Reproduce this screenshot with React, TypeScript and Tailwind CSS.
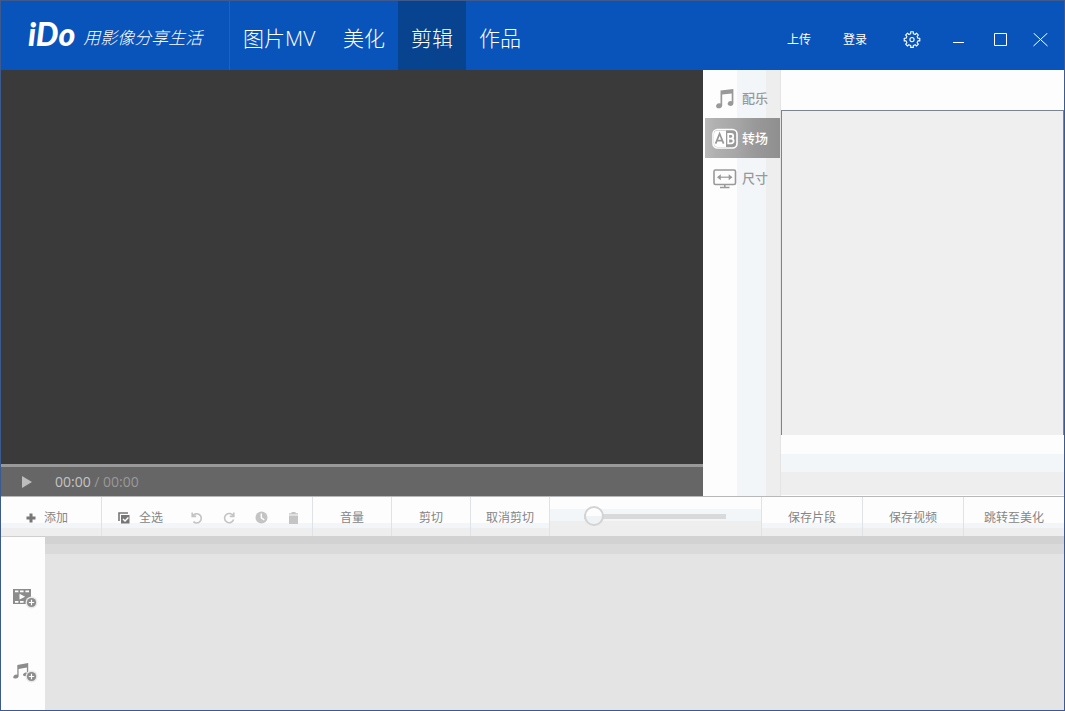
import { useState } from "react";
import type { ReactNode } from "react";

const NAV = ["图片MV", "美化", "剪辑", "作品"];

function MusicIcon() {
  return (
    <svg width="18" height="20" viewBox="0 0 18 20" fill="#999" aria-hidden="true">
      <path d="M4.5 1.6 17.4 0v14.2a2.9 2.3 -15 1 1-1.7-1.9V4.4L6.2 5.6v10.8a3.1 2.5 -15 1 1-1.7-2z" />
    </svg>
  );
}

function TransitionIcon() {
  return (
    <svg width="26" height="22" viewBox="0 0 26 22" fill="none" aria-hidden="true">
      <rect x="1" y="1.5" width="24" height="18.5" rx="4.5" fill="#9a9a9a" stroke="#fff" strokeWidth="1.6" />
      <path d="M5.5 2.5H14v16.5H5.5a3.5 3.5 0 0 1-3.5-3.5V6a3.5 3.5 0 0 1 3.5-3.5z" fill="#fff" />
      <path d="M3.6 15.6 7.6 5.8 11.6 15.6M5 12.6h5.2" stroke="#999" strokeWidth="1.7" />
      <path d="M16.2 6v9.4h3a2.4 2.4 0 0 0 0-4.8h-3 2.7a2.3 2.3 0 0 0 0-4.6z" stroke="#fff" strokeWidth="1.8" />
    </svg>
  );
}

function SizeIcon() {
  return (
    <svg width="24" height="20" viewBox="0 0 24 20" fill="none" stroke="#999" aria-hidden="true">
      <rect x="1" y="1" width="21.5" height="14.5" rx="1.5" strokeWidth="1.6" />
      <path d="M5.5 8.2h12.5" strokeWidth="1.2" />
      <path d="M4 8.2 7.8 5.2v6zM19.5 8.2 15.7 5.2v6z" fill="#999" stroke="none" />
      <path d="M11.8 15.5v2.7M7 18.5h9.5" strokeWidth="1.6" />
    </svg>
  );
}

function GearIcon() {
  return (
    <svg width="18" height="18" viewBox="0 0 18 18" fill="none" stroke="#fff" strokeWidth="1.1" strokeLinejoin="round" aria-hidden="true">
      <path d="M7.7 2.7V.8h2.6v1.9l1.9.8 1.3-1.3 1.9 1.9-1.3 1.3.8 1.9h1.9v2.6h-1.9l-.8 1.9 1.3 1.3-1.9 1.9-1.3-1.3-1.9.8v1.9H7.7v-1.9l-1.9-.8-1.3 1.3-1.9-1.9 1.3-1.3-.8-1.9H1.2V7.3h1.9l.8-1.9-1.3-1.3 1.9-1.9 1.3 1.3z" />
      <circle cx="9" cy="8.6" r="2.1" />
    </svg>
  );
}

function RotateIcon({ flip = false }: { flip?: boolean }) {
  return (
    <svg width="12" height="12" viewBox="0 0 12 12" fill="none" stroke="#c4c4c4" strokeWidth="1.6" aria-hidden="true">
      {flip ? (
        <path d="M10.8 .4v4H6.8M10.4 4.2A4.6 4.6 0 1 0 10.6 7.4" />
      ) : (
        <path d="M1.2 .4v4h4M1.6 4.2A4.6 4.6 0 1 1 2.4 9.6" />
      )}
    </svg>
  );
}

function AddMark() {
  return (
    <>
      <circle cx="18.5" cy="13.5" r="6" fill="#e9e9e9" />
      <circle cx="18.5" cy="13.5" r="4.6" fill="#8c8c8c" />
      <path d="M18.5 10.8v5.4M15.8 13.5h5.4" stroke="#fff" strokeWidth="1.2" />
    </>
  );
}

function ToolCell({ className, children }: { className: string; children: ReactNode }) {
  return (
    <button
      type="button"
      className={
        "flex shrink-0 items-center justify-center border-r border-[#dfe3e6] bg-[linear-gradient(#fdfdfd_26px,#f2f6f9_26px,#f2f6f9_31px,#eeeeee_31px)] pt-0.5 " +
        className
      }
    >
      {children}
    </button>
  );
}

export default function App() {
  const [section, setSection] = useState("剪辑");
  const [panel, setPanel] = useState("转场");
  const [zoom, setZoom] = useState(0);

  const panels = [
    { name: "配乐", icon: <MusicIcon /> },
    { name: "转场", icon: <TransitionIcon /> },
    { name: "尺寸", icon: <SizeIcon /> },
  ];

  return (
    <div className="flex min-h-screen flex-col border border-[#3d5a8f] bg-[#fdfdfd] font-['Open_Sans','Noto_Sans_CJK_SC',sans-serif] text-xs text-[#858585]">
      <header className="flex h-[69px] shrink-0 bg-[#0954ba] text-white">
        <div className="flex w-[229px] shrink-0 items-center gap-2 border-r border-[#1c62c0] pl-[27px]">
          <h1 className="pb-1 font-[Lato,sans-serif] text-[32px] leading-9 font-black italic">iDo</h1>
          <span className="pt-1 text-[17px] leading-6 font-light whitespace-nowrap italic">用影像分享生活</span>
        </div>
        <nav className="flex">
          {NAV.map((item) => (
            <a
              key={item}
              href="#"
              onClick={() => setSection(item)}
              className={
                "flex items-center px-[13px] pt-1 text-[21px] font-light whitespace-nowrap first:w-[100px] " +
                (item === section ? "bg-[#07438f]" : "")
              }
            >
              {item}
            </a>
          ))}
        </nav>
        <div className="ml-auto flex items-center pt-2 pr-4">
          <a href="#" className="mr-8 pt-px">上传</a>
          <a href="#" className="mr-9 pt-px">登录</a>
          <button type="button" aria-label="设置" className="mr-8">
            <GearIcon />
          </button>
          <button type="button" aria-label="最小化" className="mr-[30px]">
            <svg width="11" height="14" viewBox="0 0 11 14" stroke="#fff" aria-hidden="true">
              <path d="M0 9.5h11" />
            </svg>
          </button>
          <button type="button" aria-label="最大化" className="mr-[26px]">
            <svg width="13" height="13" viewBox="0 0 13 13" fill="none" stroke="#fff" aria-hidden="true">
              <path d="M.5 .5h12v12H.5z" />
            </svg>
          </button>
          <button type="button" aria-label="关闭">
            <svg width="15" height="14" viewBox="0 0 15 14" stroke="#fff" aria-hidden="true">
              <path d="M.5 0l14 13M14.5 0l-14 13" />
            </svg>
          </button>
        </div>
      </header>

      <main className="flex flex-1">
        <section className="flex min-w-0 flex-1 flex-col">
          <div className="flex-1 bg-[#3a3a3a]" />
          <div className="flex h-8 shrink-0 items-center border-t-3 border-[#999] bg-[#666] pl-5">
            <button type="button" aria-label="播放">
              <svg width="11" height="12" viewBox="0 0 11 12" fill="#bdbdbd" aria-hidden="true">
                <path d="M1 0l10 6-10 6z" />
              </svg>
            </button>
            <p className="ml-[23px] text-sm leading-5 text-[#999]">
              <span className="text-[#c4c4c4]">00:00</span> / 00:00
            </p>
          </div>
        </section>

        <nav className="w-[78px] shrink-0 border-r border-[#e4e4e4] bg-[linear-gradient(90deg,#fdfdfd_34px,#f2f6f9_34px,#f2f6f9_63px,#eeeeee_63px)] pt-2 pl-0.5">
          {panels.map(({ name, icon }) => (
            <button
              key={name}
              type="button"
              onClick={() => setPanel(name)}
              className={
                "flex h-10 w-full items-center pt-0.5 pl-[7px] text-[13px] font-medium " +
                (name === panel
                  ? "bg-[linear-gradient(90deg,#bababa,#b0b0b0_10px,#a6a6a6_32px,#999999_50px,#8f8f8f)] text-white"
                  : "text-[#999]")
              }
            >
              <span className="flex w-[26px] shrink-0 justify-center">{icon}</span>
              <span className="ml-1">{name}</span>
            </button>
          ))}
        </nav>

        <section className="flex w-[283px] shrink-0 flex-col">
          <div className="h-10 shrink-0" />
          <div className="flex-1 border border-b-0 border-[#7b858f] bg-[#efefef]" />
          <div className="h-[61px] shrink-0 bg-[linear-gradient(#fdfdfd_19px,#f2f6f9_19px,#f2f6f9_37px,#eeeeee_37px,#eeeeee_60px,#fdfdfd_60px)]" />
        </section>
      </main>

      <div className="flex h-10 shrink-0 border-t border-[#b8b8b8]">
        <ToolCell className="w-[101px] gap-2 pr-2">
          <svg width="10" height="10" viewBox="0 0 10 10" stroke="#777" strokeWidth="3" aria-hidden="true">
            <path d="M5 .5v9M.5 5h9" />
          </svg>
          <span>添加</span>
        </ToolCell>
        <div className="flex w-[211px] shrink-0 items-center border-r border-[#dfe3e6] bg-[linear-gradient(#fdfdfd_26px,#f2f6f9_26px,#f2f6f9_31px,#eeeeee_31px)] pt-0.5 pl-4">
          <button type="button" className="mr-7 flex items-center gap-[9px]">
            <svg width="12" height="12" viewBox="0 0 12 12" fill="none" aria-hidden="true">
              <path d="M1 9V1h9" stroke="#777" strokeWidth="1.6" />
              <path d="M3 3h8.5v8.5H3z" fill="#777" />
              <path d="M5 7l2 2 3.4-3.6" stroke="#fff" strokeWidth="1.4" />
            </svg>
            <span>全选</span>
          </button>
          <button type="button" aria-label="撤销" className="mr-5"><RotateIcon /></button>
          <button type="button" aria-label="重做" className="mr-5"><RotateIcon flip /></button>
          <button type="button" aria-label="时长" className="mr-5">
            <svg width="13" height="13" viewBox="0 0 13 13" fill="none" aria-hidden="true">
              <circle cx="6.5" cy="6.5" r="6" fill="#c4c4c4" />
              <path d="M6.3 2.5v4.3l3 2" stroke="#fff" strokeWidth="1.4" />
            </svg>
          </button>
          <button type="button" aria-label="删除">
            <svg width="11" height="12" viewBox="0 0 11 12" fill="#c4c4c4" aria-hidden="true">
              <path d="M1 1.2h2.5V0h4v1.2H10v1.4H1zM1 3.6h9V12H1z" />
            </svg>
          </button>
        </div>
        <ToolCell className="w-[79px]">音量</ToolCell>
        <ToolCell className="w-[79px]">剪切</ToolCell>
        <ToolCell className="w-[79px]">取消剪切</ToolCell>
        <div className="flex min-w-0 flex-1 items-center border-r border-[#dfe3e6] bg-[linear-gradient(#fdfdfd_12px,#f2f6f9_12px,#f2f6f9_24px,#eeeeee_24px)] pr-[35px] pb-px pl-[34px]">
          <input
            type="range"
            min={0}
            max={100}
            value={zoom}
            aria-label="时间轴缩放"
            onChange={(e) => setZoom(Number(e.target.value))}
            className="h-5 w-full appearance-none bg-[linear-gradient(#d9d9d9,#d9d9d9)] bg-[length:100%_5px] bg-center bg-no-repeat [&::-webkit-slider-thumb]:size-5 [&::-webkit-slider-thumb]:appearance-none [&::-webkit-slider-thumb]:rounded-full [&::-webkit-slider-thumb]:border-2 [&::-webkit-slider-thumb]:border-[#d3d3d3] [&::-webkit-slider-thumb]:bg-[linear-gradient(#fdfdfd_50%,#f0f3f6_50%)]"
          />
        </div>
        <ToolCell className="w-[101px]">保存片段</ToolCell>
        <ToolCell className="w-[101px]">保存视频</ToolCell>
        <ToolCell className="w-[100px] border-r-0">跳转至美化</ToolCell>
      </div>

      <section className="flex h-[174px] shrink-0">
        <div className="flex w-11 shrink-0 flex-col items-center gap-[54px] border-t border-[#cfcfcf] pt-[52px] pl-1">
          <button type="button" aria-label="添加视频">
            <svg width="25" height="20" viewBox="0 0 25 20" aria-hidden="true">
              <path d="M0 0h18v15H0z" fill="#8c8c8c" />
              <path d="M2 1.4h3.4v1.8H2zM7 1.4h3.6v1.8H7zM12.4 1.4H16v1.8h-3.6zM2 12h3.4v1.8H2zM7 12h3.6v1.8H7zM6.5 4.8l5.6 2.9-5.6 2.9z" fill="#fff" />
              <AddMark />
            </svg>
          </button>
          <button type="button" aria-label="添加音乐">
            <svg width="25" height="20" viewBox="0 0 25 20" aria-hidden="true">
              <path d="M4.3 2 15.2 0v11.2a2.6 1.8 -15 1 1-1.3-1.6V4.6L5.6 6v7.6a2.7 1.9 -15 1 1-1.3-1.8z" fill="#8c8c8c" />
              <AddMark />
            </svg>
          </button>
        </div>
        <div className="flex-1 bg-[linear-gradient(#d2d2d2_8px,#dadada_8px,#dadada_18px,#e4e4e4_18px)]" />
      </section>
    </div>
  );
}
